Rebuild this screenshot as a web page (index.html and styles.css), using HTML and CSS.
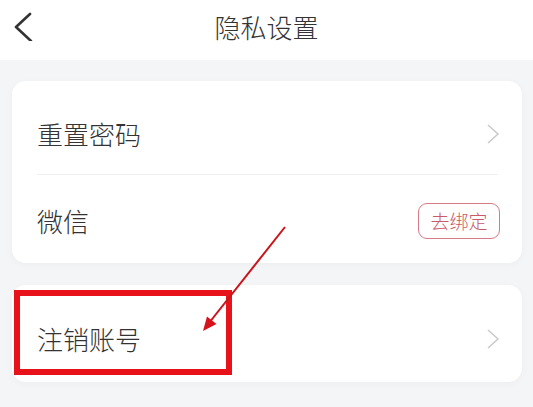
FILE: index.html
```html
<!DOCTYPE html>
<html lang="zh">
<head>
<meta charset="utf-8">
<title>隐私设置</title>
<link rel="stylesheet" href="styles.css">
</head>
<body>
<header class="topbar">
  <svg class="back" width="20" height="32" viewBox="0 0 20 32"><polyline points="16,5 2,18 17,32" fill="none" stroke="#333" stroke-width="2.6" stroke-linecap="round" stroke-linejoin="round"/></svg>
  <h1 class="title">隐私设置</h1>
</header>
<main class="content">
  <section class="card">
    <div class="row row-first">
      <span class="label">重置密码</span>
      <svg class="chev" width="14" height="20" viewBox="0 0 14 20"><polyline points="2,1 12,10 2,19" fill="none" stroke="#c9c9c9" stroke-width="1.5"/></svg>
    </div>
    <div class="divider"></div>
    <div class="row row-second">
      <span class="label">微信</span>
      <span class="unbind">去绑定</span>
    </div>
  </section>
  <section class="card">
    <div class="row row-single">
      <span class="label">注销账号</span>
      <svg class="chev" width="14" height="20" viewBox="0 0 14 20"><polyline points="2,1 12,10 2,19" fill="none" stroke="#c9c9c9" stroke-width="1.5"/></svg>
    </div>
  </section>
</main>
<div class="highlight"></div>
<svg class="arrow" width="533" height="407" viewBox="0 0 533 407">
  <line x1="285" y1="227" x2="209" y2="323" stroke="#c8141c" stroke-width="2"/>
  <polygon points="203,331 207,316.5 216.5,324" fill="#d8121a"/>
</svg>
</body>
</html>
```
FILE: styles.css
```css
* { box-sizing: border-box; }
html, body { margin: 0; padding: 0; }
body {
  width: 533px;
  height: 407px;
  overflow: hidden;
  background: #f4f5f7;
  font-family: "Noto Sans CJK SC", "Noto Sans", sans-serif;
  font-weight: 300;
  color: #333;
  position: relative;
}
.topbar {
  height: 60px;
  background: #fff;
  display: flex;
  align-items: center;
  justify-content: center;
  position: relative;
  padding-bottom: 6px;
}
.back {
  position: absolute;
  left: 14px;
  top: 9px;
}
.title {
  margin: 0;
  font-size: 26px;
  font-weight: 300;
  color: #333;
  line-height: 1;
}
.content {
  padding: 21px 11px 0 12px;
  display: flex;
  flex-direction: column;
  gap: 22px;
}
.card {
  background: #fff;
  border-radius: 14px;
  box-shadow: 0 2px 8px rgba(0, 0, 0, 0.03);
  padding: 0 23px 0 25px;
}
.row {
  display: flex;
  align-items: center;
  justify-content: space-between;
}
.row-first { height: 93px; padding-top: 12px; }
.row-second { height: 88px; padding-top: 3px; }
.row-single { height: 97px; padding-top: 11px; }
.label {
  font-size: 26px;
  line-height: 1;
  color: #333;
}
.chev { margin-right: -1px; }
.divider {
  height: 1px;
  background: #efefef;
  margin-right: 1px;
}
.unbind {
  width: 82px;
  height: 36px;
  border: 1.5px solid #d57a86;
  border-radius: 9px;
  color: #c95a68;
  font-size: 19px;
  display: flex;
  align-items: center;
  justify-content: center;
  margin-right: -1px;
}
.highlight {
  position: absolute;
  left: 14px;
  top: 290px;
  width: 218px;
  height: 85px;
  border: 6px solid #e8121a;
}
.arrow {
  position: absolute;
  left: 0;
  top: 0;
}
```
